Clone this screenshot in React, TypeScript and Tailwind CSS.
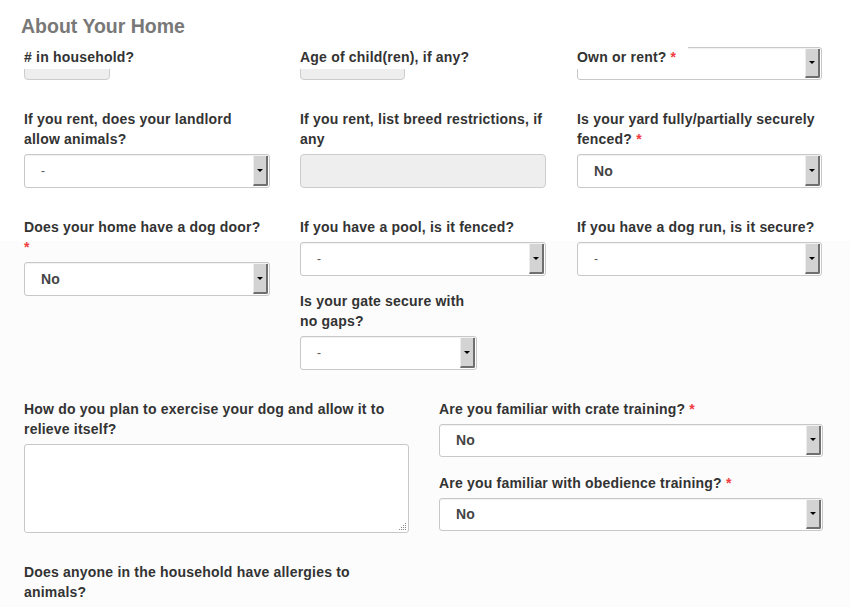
import React from "react";

function Req() {
  return <span className="text-[#f03c3c] font-bold"> *</span>;
}

function SelectBox({ value, height = "h-[34px]" }: { value: string; height?: string }) {
  const isDash = value === "-";
  return (
    <div
      className={`w-full ${height} flex items-center bg-white border border-[#c8c8c8] rounded-[3px] shadow-[inset_0_1px_1px_rgba(0,0,0,0.06)]`}
    >
      <span
        className={
          isDash
            ? "pl-4 text-[12px] text-[#555]"
            : "pl-4 text-[14px] font-bold text-[#444] tracking-[0.2px]"
        }
      >
        {value}
      </span>
      <div className="ml-auto mr-[1px] self-stretch my-[1px] w-[15px] flex items-center justify-center bg-[#d3d3d3] border-l border-l-[#ececec] border-r-2 border-r-[#6f6f6f] border-b-2 border-b-[#6f6f6f] rounded-br-[2px]">
        <span className="w-0 h-0 border-l-[3px] border-r-[3px] border-t-[3px] border-l-transparent border-r-transparent border-t-black" />
      </div>
    </div>
  );
}

function Label({ children, className = "" }: { children: React.ReactNode; className?: string }) {
  return (
    <div className={`text-[14px] leading-[20px] font-bold tracking-[0.2px] text-[#333] mb-[5px] ${className}`}>
      {children}
    </div>
  );
}

export default function App() {
  return (
    <div
      className="w-[850px] h-[607px] overflow-hidden bg-[linear-gradient(to_bottom,#ffffff_241px,#fcfcfc_241px)] pl-[24px]"
      style={{ fontFamily: '"Liberation Sans", Arial, sans-serif' }}
    >
      {/* Heading */}
      <h2 className="-ml-[3px] pt-[14px] text-[19.5px] leading-[24px] font-bold text-[#787878]">
        About Your Home
      </h2>

      {/* Row 1 */}
      <div className="mt-[7px] grid grid-cols-[246px_246px_246px] gap-x-[30px] items-start">
        <div>
          <div className="relative z-10 inline-block bg-white pr-1 h-[22px] text-[14px] leading-[20px] font-bold tracking-[0.2px] text-[#333]">
            # in household?
          </div>
          <div className="-mt-[22px] w-[86px] h-[33px] bg-[#eeeeee] border border-[#cccccc] rounded-[4px]" />
        </div>
        <div>
          <div className="relative z-10 inline-block bg-white pr-1 h-[22px] text-[14px] leading-[20px] font-bold tracking-[0.2px] text-[#333]">
            Age of child(ren), if any?
          </div>
          <div className="-mt-[22px] w-[105px] h-[33px] bg-[#eeeeee] border border-[#cccccc] rounded-[4px]" />
        </div>
        <div className="ml-[1px]">
          <div className="relative z-10 inline-block bg-white pr-3 h-[22px] text-[14px] leading-[20px] font-bold tracking-[0.2px] text-[#333]">
            Own or rent?<Req />
          </div>
          <div className="-mt-[22px]">
            <SelectBox value="" height="h-[33px]" />
          </div>
        </div>
      </div>

      {/* Row 2 */}
      <div className="mt-[29px] grid grid-cols-[246px_246px_246px] gap-x-[30px] items-start">
        <div>
          <Label>If you rent, does your landlord allow animals?</Label>
          <SelectBox value="-" />
        </div>
        <div>
          <Label>If you rent, list breed restrictions, if any</Label>
          <div className="h-[34px] bg-[#eeeeee] border border-[#cccccc] rounded-[4px]" />
        </div>
        <div className="ml-[1px]">
          <Label>
            Is your yard fully/partially securely fenced?<Req />
          </Label>
          <SelectBox value="No" />
        </div>
      </div>

      {/* Row 3 */}
      <div className="mt-[29px] grid grid-cols-[246px_246px_246px] gap-x-[30px] items-start">
        <div>
          <Label>
            Does your home have a dog door?<Req />
          </Label>
          <SelectBox value="No" />
        </div>
        <div>
          <Label>If you have a pool, is it fenced?</Label>
          <SelectBox value="-" />
          <div className="mt-[15px] w-[177px]">
            <Label>Is your gate secure with no gaps?</Label>
            <SelectBox value="-" />
          </div>
        </div>
        <div className="ml-[1px]">
          <Label>If you have a dog run, is it secure?</Label>
          <SelectBox value="-" />
        </div>
      </div>

      {/* Row 4 */}
      <div className="mt-[29px] grid grid-cols-[385px_384px] gap-x-[30px] items-start">
        <div>
          <Label>How do you plan to exercise your dog and allow it to relieve itself?</Label>
          <div className="relative h-[89px] bg-white border border-[#c8c8c8] rounded-[3px]">
            <svg
              className="absolute right-[1px] bottom-[1px]"
              width="9"
              height="9"
              viewBox="0 0 9 9"
            >
              {[
                [7, 1],
                [5, 3],
                [7, 3],
                [3, 5],
                [5, 5],
                [7, 5],
                [1, 7],
                [3, 7],
                [5, 7],
                [7, 7],
              ].map(([x, y], i) => (
                <rect key={i} x={x} y={y} width="1" height="1" fill="#8a8a8a" />
              ))}
            </svg>
          </div>
        </div>
        <div>
          <Label>
            Are you familiar with crate training?<Req />
          </Label>
          <SelectBox value="No" height="h-[33px]" />
          <Label className="mt-[16px]">
            Are you familiar with obedience training?<Req />
          </Label>
          <SelectBox value="No" height="h-[33px]" />
        </div>
      </div>

      {/* Row 5 */}
      <div className="mt-[29px] w-[385px]">
        <Label>Does anyone in the household have allergies to animals?</Label>
      </div>
    </div>
  );
}
